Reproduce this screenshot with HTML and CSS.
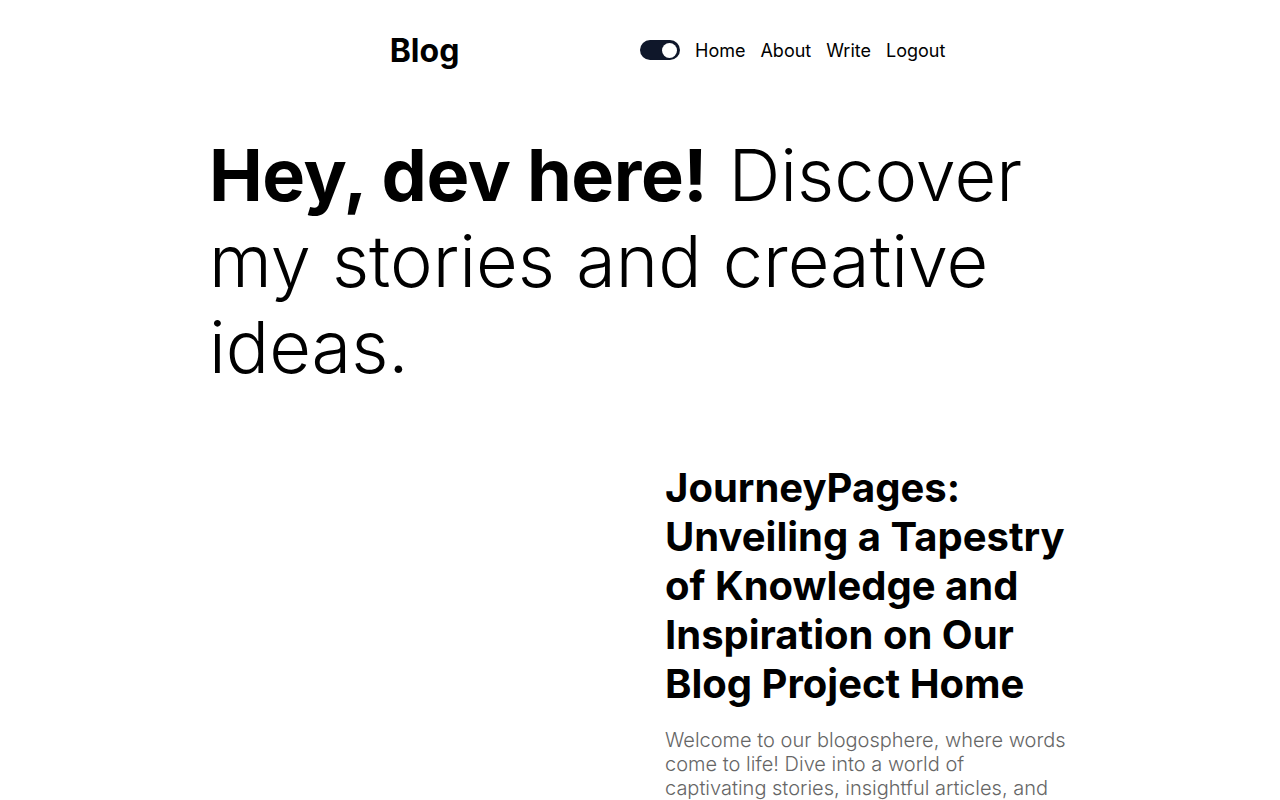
FILE: index.html
```html
<!DOCTYPE html>
<html lang="en">
<head>
<meta charset="utf-8">
<title>Blog</title>
<link rel="stylesheet" href="styles.css">
</head>
<body>
<div class="container">
  <header class="navbar">
    <div class="logo-wrap"><a class="logo" href="#">Blog</a></div>
    <nav class="links">
      <button class="toggle" aria-label="toggle theme"><span class="knob"></span></button>
      <a href="#">Home</a>
      <a href="#">About</a>
      <a href="#">Write</a>
      <a href="#">Logout</a>
    </nav>
  </header>
  <h1 class="hero"><b>Hey, dev here!</b> Discover my stories and creative ideas.</h1>
  <section class="featured">
    <div class="img-box"></div>
    <div class="text-box">
      <h2 class="post-title">JourneyPages: Unveiling a Tapestry of Knowledge and Inspiration on Our Blog Project Home</h2>
      <p class="post-desc">Welcome to our blogosphere, where words come to life! Dive into a world of captivating stories, insightful articles, and thought-provoking ideas.</p>
    </div>
  </section>
</div>
</body>
</html>
```

FILE: styles.css
```css
* { box-sizing: border-box; }
body {
  margin: 0;
  font-family: Inter, "Noto Sans", sans-serif;
  color: #000;
  background: #fff;
}
a { color: inherit; text-decoration: none; }
.container {
  width: 862px;
  margin: 0 auto;
}
.navbar {
  display: flex;
  align-items: center;
  height: 100px;
}
.logo-wrap {
  flex: 1;
  text-align: center;
}
.logo {
  font-size: 32px;
  font-weight: 700;
}
.links {
  flex: 1;
  display: flex;
  align-items: center;
  gap: 15px;
  font-size: 18px;
}
.toggle {
  width: 40px;
  height: 20px;
  border: none;
  border-radius: 10px;
  background: #0f172a;
  padding: 0 3px;
  display: flex;
  align-items: center;
  justify-content: flex-end;
}
.knob {
  width: 15px;
  height: 15px;
  border-radius: 50%;
  background: #fff;
}
.hero {
  margin: 32px 0 0;
  font-size: 72px;
  line-height: 86px;
  font-weight: 300;
  word-spacing: 1px;
}
.hero b {
  font-weight: 700;
  letter-spacing: -0.45px;
  word-spacing: 0;
}
.featured {
  margin-top: 73px;
  display: grid;
  grid-template-columns: 1fr 1fr;
  gap: 50px;
}
.img-box { height: 500px; }
.post-title {
  margin: 0;
  font-size: 40px;
  line-height: 49px;
  font-weight: 700;
}
.post-desc {
  margin: 20px 0 0;
  font-size: 20px;
  line-height: 24px;
  font-weight: 300;
  color: #666;
}
```
